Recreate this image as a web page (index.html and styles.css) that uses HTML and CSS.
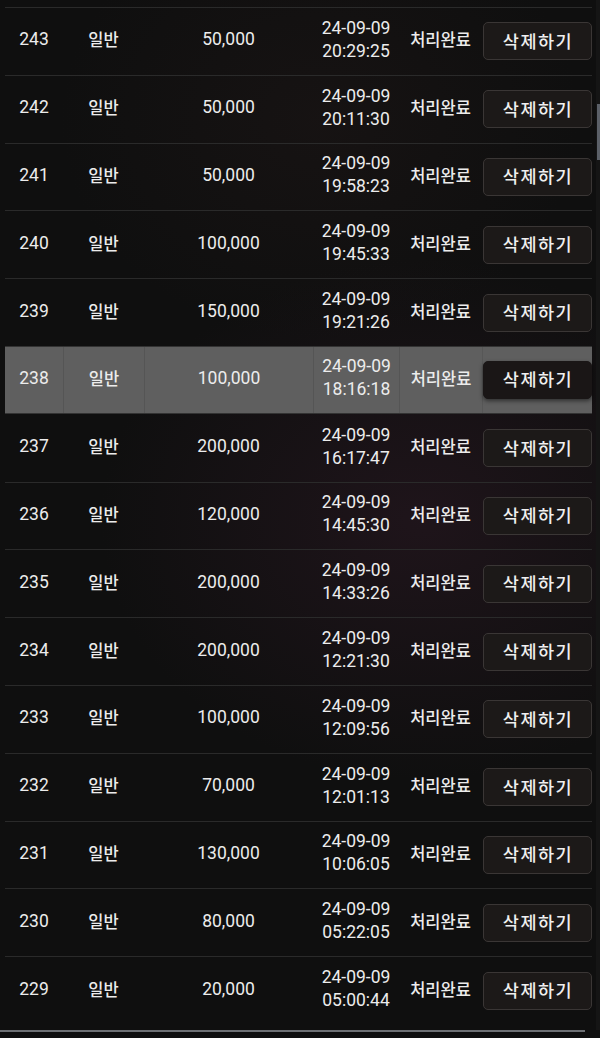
FILE: index.html
```html
<!DOCTYPE html>
<html lang="ko">
<head>
<meta charset="utf-8">
<title>처리내역</title>
<link rel="stylesheet" href="styles.css">
</head>
<body>
<div class="viewport">
  <div class="list">
    <div class="row"><div class="c no">243</div><div class="c ko">일반</div><div class="c amt">50,000</div><div class="c dt">24-09-09<br>20:29:25</div><div class="c ko">처리완료</div><div class="c act"><button class="del">삭제하기</button></div></div>
    <div class="row"><div class="c no">242</div><div class="c ko">일반</div><div class="c amt">50,000</div><div class="c dt">24-09-09<br>20:11:30</div><div class="c ko">처리완료</div><div class="c act"><button class="del">삭제하기</button></div></div>
    <div class="row"><div class="c no">241</div><div class="c ko">일반</div><div class="c amt">50,000</div><div class="c dt">24-09-09<br>19:58:23</div><div class="c ko">처리완료</div><div class="c act"><button class="del">삭제하기</button></div></div>
    <div class="row"><div class="c no">240</div><div class="c ko">일반</div><div class="c amt">100,000</div><div class="c dt">24-09-09<br>19:45:33</div><div class="c ko">처리완료</div><div class="c act"><button class="del">삭제하기</button></div></div>
    <div class="row"><div class="c no">239</div><div class="c ko">일반</div><div class="c amt">150,000</div><div class="c dt">24-09-09<br>19:21:26</div><div class="c ko">처리완료</div><div class="c act"><button class="del">삭제하기</button></div></div>
    <div class="row active"><div class="c no">238</div><div class="c ko">일반</div><div class="c amt">100,000</div><div class="c dt">24-09-09<br>18:16:18</div><div class="c ko">처리완료</div><div class="c act"><button class="del">삭제하기</button></div></div>
    <div class="row"><div class="c no">237</div><div class="c ko">일반</div><div class="c amt">200,000</div><div class="c dt">24-09-09<br>16:17:47</div><div class="c ko">처리완료</div><div class="c act"><button class="del">삭제하기</button></div></div>
    <div class="row"><div class="c no">236</div><div class="c ko">일반</div><div class="c amt">120,000</div><div class="c dt">24-09-09<br>14:45:30</div><div class="c ko">처리완료</div><div class="c act"><button class="del">삭제하기</button></div></div>
    <div class="row"><div class="c no">235</div><div class="c ko">일반</div><div class="c amt">200,000</div><div class="c dt">24-09-09<br>14:33:26</div><div class="c ko">처리완료</div><div class="c act"><button class="del">삭제하기</button></div></div>
    <div class="row"><div class="c no">234</div><div class="c ko">일반</div><div class="c amt">200,000</div><div class="c dt">24-09-09<br>12:21:30</div><div class="c ko">처리완료</div><div class="c act"><button class="del">삭제하기</button></div></div>
    <div class="row"><div class="c no">233</div><div class="c ko">일반</div><div class="c amt">100,000</div><div class="c dt">24-09-09<br>12:09:56</div><div class="c ko">처리완료</div><div class="c act"><button class="del">삭제하기</button></div></div>
    <div class="row"><div class="c no">232</div><div class="c ko">일반</div><div class="c amt">70,000</div><div class="c dt">24-09-09<br>12:01:13</div><div class="c ko">처리완료</div><div class="c act"><button class="del">삭제하기</button></div></div>
    <div class="row"><div class="c no">231</div><div class="c ko">일반</div><div class="c amt">130,000</div><div class="c dt">24-09-09<br>10:06:05</div><div class="c ko">처리완료</div><div class="c act"><button class="del">삭제하기</button></div></div>
    <div class="row"><div class="c no">230</div><div class="c ko">일반</div><div class="c amt">80,000</div><div class="c dt">24-09-09<br>05:22:05</div><div class="c ko">처리완료</div><div class="c act"><button class="del">삭제하기</button></div></div>
    <div class="row"><div class="c no">229</div><div class="c ko">일반</div><div class="c amt">20,000</div><div class="c dt">24-09-09<br>05:00:44</div><div class="c ko">처리완료</div><div class="c act"><button class="del">삭제하기</button></div></div>
  </div>
  <div class="vscroll"><div class="vthumb"></div></div>
  <div class="hscroll"></div>
</div>
</body>
</html>
```

FILE: styles.css
```css
html, body {
  margin: 0;
  padding: 0;
  background: #0e0e0e;
}

.viewport {
  position: relative;
  width: 600px;
  height: 1038px;
  overflow: hidden;
  background:
    radial-gradient(ellipse 320px 260px at 420px 520px, rgba(60, 30, 48, 0.35), rgba(60, 30, 48, 0) 100%),
    radial-gradient(ellipse 260px 220px at 320px 120px, rgba(45, 30, 30, 0.25), rgba(45, 30, 30, 0) 100%),
    #0f0f0f;
  font-family: "Roboto", "Noto Sans CJK KR", sans-serif;
  color: #ececec;
}

.list {
  display: flex;
  flex-direction: column;
  padding: 7px 8px 0 5px;
}

.row {
  display: grid;
  grid-template-columns: 58px 81px 169px 86px 83px 110px;
  height: 66.8px;
  border-top: 1px solid #2a2a2a;
  align-items: stretch;
}

.c {
  display: flex;
  align-items: center;
  justify-content: center;
  text-align: center;
  font-size: 17.5px;
  line-height: 23px;
  padding-bottom: 3px;
}

.c.ko {
  font-family: "Noto Sans CJK KR", "Roboto", sans-serif;
  font-size: 16.5px;
  font-weight: 500;
}

.c.act {
  justify-content: flex-end;
  padding-bottom: 0;
}

.del {
  width: 109px;
  height: 38px;
  border: 1px solid #3a3635;
  border-radius: 5px;
  background: #1c1918;
  color: #efefef;
  font-family: "Noto Sans CJK KR", "Roboto", sans-serif;
  font-size: 17.5px;
  font-weight: 500;
  letter-spacing: 1.5px;
  padding: 0 0 2px 1px;
  cursor: pointer;
}

.row.active {
  background: #5f5f5f;
  border-top-color: #333;
  border-bottom: 1px solid #333;
  height: 65.8px;
}

.row.active .c + .c {
  border-left: 1px solid #555;
}

.row.active .c.act {
  border-left: 1px solid #575757;
}

.row.active .del {
  background: #1a1616;
  border-color: #1a1616;
  box-shadow: 0 2px 4px rgba(0, 0, 0, 0.5);
}

.row.active + .row {
  border-top-color: transparent;
}

.vscroll {
  position: absolute;
  top: 0;
  right: 0;
  width: 4px;
  height: 1030px;
  background: #151515;
}

.vthumb {
  margin-top: 104px;
  width: 3px;
  margin-left: 1px;
  height: 56px;
  background: #5b6068;
}

.hscroll {
  position: absolute;
  left: 0;
  bottom: 6px;
  width: 585px;
  height: 2px;
  background: #6d7074;
}
```
